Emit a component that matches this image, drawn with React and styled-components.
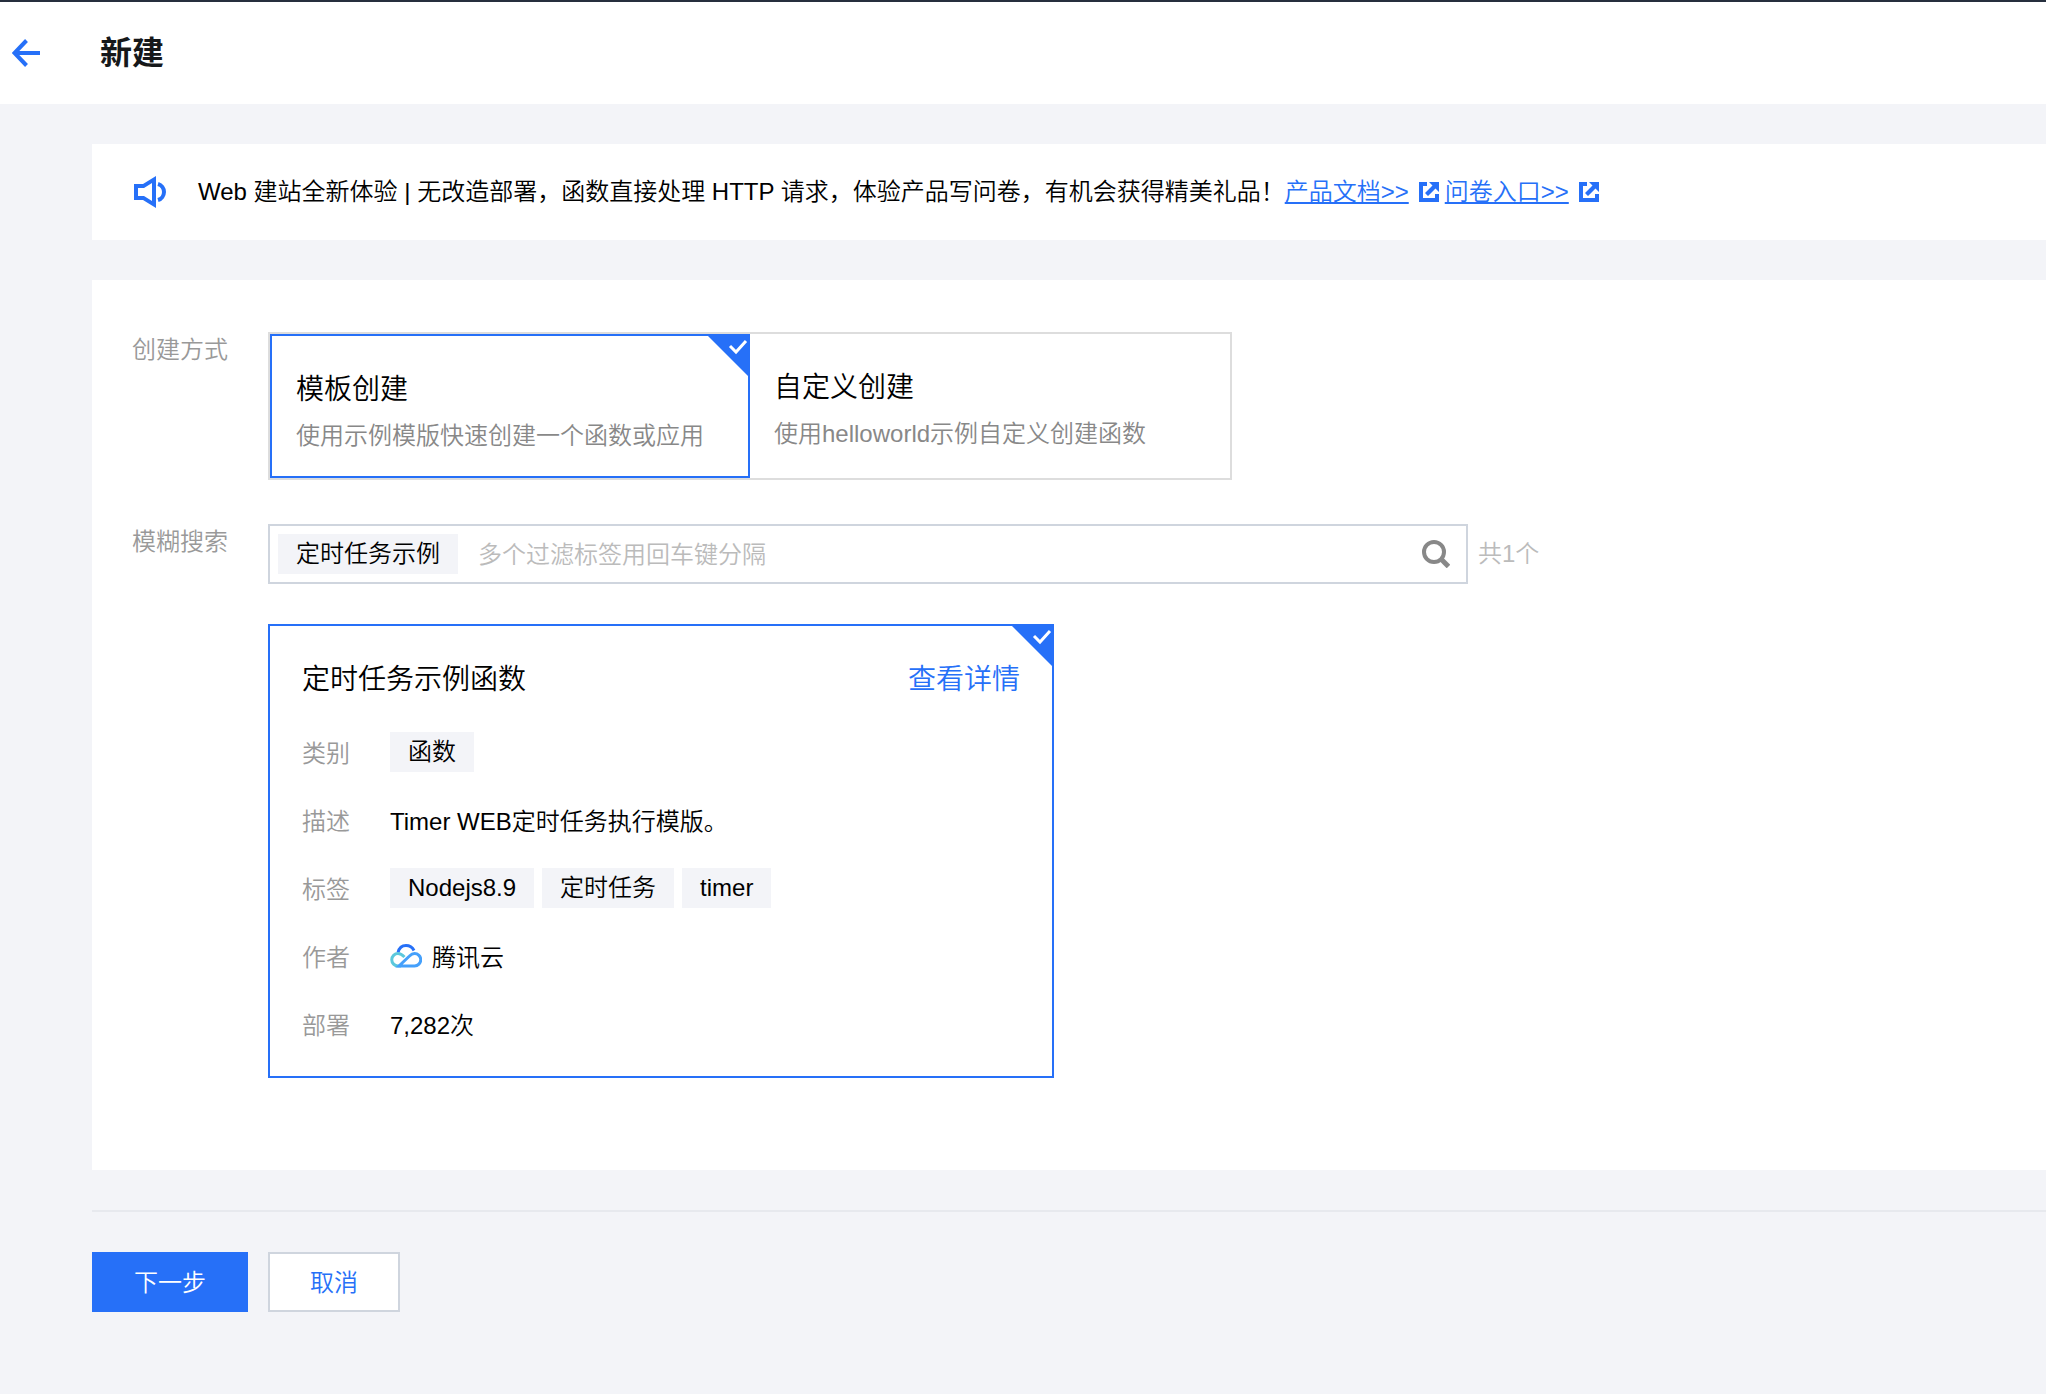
import React, { useState } from "react";
import styled, { createGlobalStyle, css } from "styled-components";

const tags = ["Nodejs8.9", "定时任务", "timer"];

const modes = [
  { id: "template", title: "模板创建", desc: "使用示例模版快速创建一个函数或应用" },
  { id: "custom", title: "自定义创建", desc: "使用helloworld示例自定义创建函数" },
];

const BackIcon = () => (
  <svg width="28" height="28" viewBox="0 0 28 28" fill="none" stroke="currentColor" strokeWidth="4">
    <path d="M28 14H3M14.500 1.500L2.500 14l12 12.500" />
  </svg>
);

const SpeakerIcon = () => (
  <svg width="32" height="32" viewBox="0 0 32 32" fill="none">
    <path
      d="M0 8h9l13-8v32L9 24H0zM4 12v8h6l8 5V7l-8 5z"
      fill="currentColor"
      fillRule="evenodd"
    />
    <path d="M24 8c3.500 1 6 4.500 6 8s-2.500 7-6 8" stroke="currentColor" strokeWidth="4" />
  </svg>
);

const ExternalIcon = () => (
  <svg width="20" height="20" viewBox="0 0 20 20" fill="currentColor">
    <path d="M0 0h8v4H4v12h12v-4h4v8H0z" />
    <path d="M10 0h10v10l-3.500-3.500-7.500 7.500-3-3 7.500-7.500z" />
  </svg>
);

const SearchIcon = () => (
  <svg width="28" height="28" viewBox="0 0 28 28" fill="none" stroke="currentColor" strokeWidth="4">
    <circle cx="12" cy="12" r="10" />
    <path d="M19 19l7.500 7.500" strokeWidth="5" />
  </svg>
);

const CloudIcon = () => (
  <svg width="32" height="28" viewBox="0 0 32 28" fill="none" strokeWidth="3">
    <path d="M8 8.500C9 4.500 12 1.500 16 1.500c3.500 0 6.500 2 8 5" stroke="#2670f8" />
    <path d="M14.500 13C12.500 11 10.500 9.500 8 9.500a6 6 0 0 0 0 12.500h3" stroke="#5bc8dc" />
    <path d="M9 22h15.500a6.200 6.200 0 0 0 0-12.500c-2 0-3.500 1-5 2.500L9 22z" stroke="#45a0fb" />
  </svg>
);

const CornerCheck = () => (
  <Corner viewBox="0 0 44 44" aria-hidden="true">
    <path d="M0 0h44v44z" fill="#2670f8" />
    <path d="M24 12l6 6L40 7" fill="none" stroke="#fff" strokeWidth="3" />
  </Corner>
);

const App = () => {
  const [mode, setMode] = useState("template");
  const [keyword, setKeyword] = useState("");

  return (
    <Page>
      <GlobalStyle />
      <Header>
        <BackButton type="button" aria-label="返回">
          <BackIcon />
        </BackButton>
        <PageTitle>新建</PageTitle>
      </Header>
      <Content>
        <Notice>
          <NoticeIcon>
            <SpeakerIcon />
          </NoticeIcon>
          <NoticeText>
            Web 建站全新体验 | 无改造部署，函数直接处理 HTTP 请求，体验产品写问卷，有机会获得精美礼品！
          </NoticeText>
          <NoticeLink href="#docs">
            <u>产品文档&gt;&gt;</u>
            <ExternalIcon />
          </NoticeLink>
          <NoticeLink href="#survey">
            <u>问卷入口&gt;&gt;</u>
            <ExternalIcon />
          </NoticeLink>
        </Notice>

        <Panel>
          <FormRow>
            <FormLabel as="span">创建方式</FormLabel>
            <ModeGroup role="radiogroup" aria-label="创建方式">
              {modes.map((item) => (
                <ModeCard key={item.id} $active={mode === item.id}>
                  <HiddenRadio
                    type="radio"
                    name="mode"
                    value={item.id}
                    checked={mode === item.id}
                    onChange={() => setMode(item.id)}
                  />
                  <ModeTitle>{item.title}</ModeTitle>
                  <ModeDesc>{item.desc}</ModeDesc>
                  {mode === item.id && <CornerCheck />}
                </ModeCard>
              ))}
            </ModeGroup>
          </FormRow>

          <FormRow>
            <FormLabel htmlFor="keyword">模糊搜索</FormLabel>
            <SearchColumn>
              <SearchLine>
                <SearchBox>
                  <Tag>定时任务示例</Tag>
                  <SearchInput
                    id="keyword"
                    type="text"
                    placeholder="多个过滤标签用回车键分隔"
                    value={keyword}
                    onChange={(e) => setKeyword(e.target.value)}
                  />
                  <SearchButton type="button" aria-label="搜索">
                    <SearchIcon />
                  </SearchButton>
                </SearchBox>
                <Count>共1个</Count>
              </SearchLine>

              <TemplateCard>
                <CornerCheck />
                <TemplateHead>
                  <TemplateTitle>定时任务示例函数</TemplateTitle>
                  <DetailLink href="#detail">查看详情</DetailLink>
                </TemplateHead>
                <Details>
                  <DetailLabel>类别</DetailLabel>
                  <DetailValue>
                    <Tag>函数</Tag>
                  </DetailValue>
                  <DetailLabel>描述</DetailLabel>
                  <DetailValue>Timer WEB定时任务执行模版。</DetailValue>
                  <DetailLabel>标签</DetailLabel>
                  <DetailValue>
                    {tags.map((tag) => (
                      <Tag key={tag}>{tag}</Tag>
                    ))}
                  </DetailValue>
                  <DetailLabel>作者</DetailLabel>
                  <DetailValue $gap={10}>
                    <CloudIcon />
                    腾讯云
                  </DetailValue>
                  <DetailLabel>部署</DetailLabel>
                  <DetailValue>7,282次</DetailValue>
                </Details>
              </TemplateCard>
            </SearchColumn>
          </FormRow>
        </Panel>

        <Actions>
          <Button type="button" $primary>
            下一步
          </Button>
          <Button type="button">取消</Button>
        </Actions>
      </Content>
    </Page>
  );
};

const GlobalStyle = createGlobalStyle`
  * {
    box-sizing: border-box;
  }

  body {
    margin: 0;
    background: #f3f4f8;
    color: #000;
    font-family: "Liberation Sans", "Noto Sans CJK SC", sans-serif;
    font-size: 24px;
    font-weight: 350;
    line-height: 36px;
  }

  button,
  input {
    font: inherit;
  }

  svg {
    display: block;
    flex: none;
  }
`;

const Page = styled.div`
  min-height: 100vh;
`;

const Header = styled.header`
  display: flex;
  align-items: center;
  gap: 60px;
  height: 104px;
  padding-left: 12px;
  border-top: 2px solid #262f3e;
  background: #fff;
`;

const BackButton = styled.button`
  padding: 0;
  border: none;
  background: none;
  color: #2670f8;
  cursor: pointer;
`;

const PageTitle = styled.h1`
  margin: 0;
  color: #16181a;
  font-size: 32px;
  font-weight: 700;
  line-height: 48px;
`;

const Content = styled.main`
  padding: 40px 0 40px 92px;
`;

// Announcement bar
const Notice = styled.section`
  display: flex;
  align-items: center;
  height: 96px;
  padding: 0 42px;
  background: #fff;
`;

const NoticeIcon = styled.span`
  margin-right: 32px;
  color: #2670f8;
`;

const NoticeText = styled.span`
  white-space: nowrap;
`;

const NoticeLink = styled.a`
  display: flex;
  align-items: center;
  gap: 10px;
  margin-right: 6px;
  color: #2670f8;
  white-space: nowrap;
  text-decoration: none;

  u {
    text-decoration-thickness: 2px;
    text-underline-offset: 2px;
  }
`;

const Panel = styled.section`
  display: flex;
  flex-direction: column;
  gap: 44px;
  margin-top: 40px;
  padding: 52px 40px 92px;
  background: #fff;
`;

const FormRow = styled.div`
  display: flex;
  align-items: flex-start;
`;

const FormLabel = styled.label`
  flex: none;
  width: 136px;
  color: #999;
`;

const ModeGroup = styled.div`
  display: grid;
  grid-template-columns: 1fr 1fr;
  width: 964px;
  border: 2px solid #ddd;
`;

const ModeCard = styled.label`
  position: relative;
  display: flex;
  flex-direction: column;
  gap: 6px;
  height: 144px;
  padding: 32px 24px 0;
  cursor: pointer;

  ${(props) =>
    props.$active &&
    css`
      border: 2px solid #2670f8;
    `}
`;

const HiddenRadio = styled.input`
  position: absolute;
  opacity: 0;
`;

const ModeTitle = styled.span`
  font-size: 28px;
  line-height: 44px;
`;

const ModeDesc = styled.span`
  color: #888;
`;

const Corner = styled.svg`
  position: absolute;
  top: -2px;
  right: -2px;
  width: 44px;
  height: 44px;
`;

const SearchColumn = styled.div`
  flex: 1;
`;

const SearchLine = styled.div`
  display: flex;
  align-items: center;
  gap: 10px;
`;

const SearchBox = styled.div`
  display: flex;
  align-items: center;
  width: 1200px;
  height: 60px;
  padding: 0 16px 0 8px;
  border: 2px solid #cfd5de;
`;

const Tag = styled.span`
  flex: none;
  height: 40px;
  padding: 0 18px;
  background: #f3f4f8;
  line-height: 40px;
`;

const SearchInput = styled.input`
  flex: 1;
  min-width: 0;
  padding: 2px 20px 0;
  border: none;
  outline: none;
  background: none;

  &::placeholder {
    color: #bbb;
    opacity: 1;
  }
`;

const SearchButton = styled.button`
  padding: 0;
  border: none;
  background: none;
  color: #888;
  cursor: pointer;
`;

const Count = styled.span`
  color: #bbb;
`;

const TemplateCard = styled.article`
  position: relative;
  width: 786px;
  margin-top: 40px;
  padding: 32px;
  border: 2px solid #2670f8;
`;

const TemplateHead = styled.div`
  display: flex;
  justify-content: space-between;
  font-size: 28px;
  line-height: 44px;
`;

const TemplateTitle = styled.h2`
  margin: 0;
  font-size: inherit;
  font-weight: inherit;
`;

const DetailLink = styled.a`
  color: #2670f8;
  text-decoration: none;
`;

const Details = styled.dl`
  display: grid;
  grid-template-columns: 88px 1fr;
  grid-auto-rows: 40px;
  align-items: end;
  row-gap: 28px;
  margin: 30px 0 0;
`;

const DetailLabel = styled.dt`
  color: #999;
`;

const DetailValue = styled.dd`
  display: flex;
  align-items: center;
  gap: ${(props) => props.$gap || 8}px;
  margin: 0;
`;

const Actions = styled.footer`
  display: flex;
  gap: 20px;
  margin-top: 40px;
  padding-top: 40px;
  border-top: 2px solid #e7e9ee;
`;

const Button = styled.button`
  height: 60px;
  padding: 2px 40px 0;
  border: 2px solid ${(props) => (props.$primary ? "#2670f8" : "#cfd5de")};
  background: ${(props) => (props.$primary ? "#2670f8" : "#fff")};
  color: ${(props) => (props.$primary ? "#fff" : "#2670f8")};
  cursor: pointer;
`;

export default App;
